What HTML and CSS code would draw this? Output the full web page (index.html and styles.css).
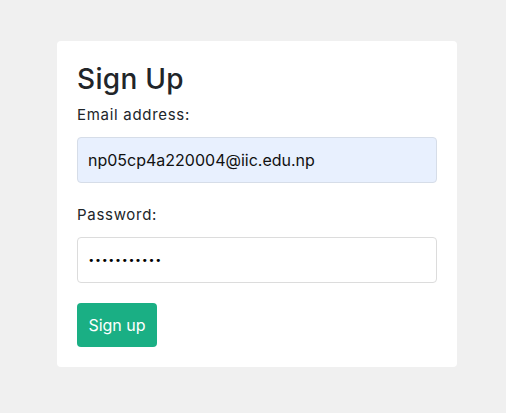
FILE: index.html
```html
<!DOCTYPE html>
<html>
<head>
<meta charset="utf-8">
<link rel="stylesheet" href="styles.css">
</head>
<body>
<div class="card">
  <h2 class="title">Sign Up</h2>
  <div class="field">
    <label class="label">Email address:</label>
    <div class="input filled">np05cp4a220004@iic.edu.np</div>
  </div>
  <div class="field last">
    <label class="label">Password:</label>
    <div class="input"><span class="dots">•••••••••••</span></div>
  </div>
  <button class="btn">Sign up</button>
</div>
</body>
</html>
```
FILE: styles.css
```css
html, body { margin: 0; padding: 0; }
body {
  background: #f0f0f0;
  font-family: "Inter", "Open Sans", sans-serif;
  color: #212529;
  padding: 41px 0 0 57px;
  height: 413px;
  box-sizing: border-box;
}
.card {
  width: 400px;
  box-sizing: border-box;
  background: #fff;
  border-radius: 4px;
  padding: 20px 20px 20px 20px;
}
.title {
  margin: 0 0 7px 0;
  font-size: 28px;
  font-weight: 500;
  line-height: 36px;
  letter-spacing: 0.3px;
}
.field { display: flex; flex-direction: column; margin-bottom: 21px; }
.field.last { margin-bottom: 20px; }
.label {
  font-size: 15px;
  line-height: 22px;
  margin-bottom: 11px;
  letter-spacing: 0.7px;
}
.input {
  height: 46px;
  box-sizing: border-box;
  border: 1px solid #dcdcdc;
  border-radius: 4px;
  padding: 0 10px;
  display: flex;
  align-items: center;
  font-size: 16px;
  color: #111;
}
.input.filled { background: #e8f0fe; border-color: #d6dde8; }
.dots { font-family: "DejaVu Sans", sans-serif; font-size: 11px; letter-spacing: 0.2px; color: #000; }
.btn {
  display: block;
  width: 80px;
  height: 44px;
  border: none;
  border-radius: 4px;
  background: #1aaf84;
  color: #fff;
  font-family: inherit;
  font-size: 16px;
  padding: 0;
}
```
